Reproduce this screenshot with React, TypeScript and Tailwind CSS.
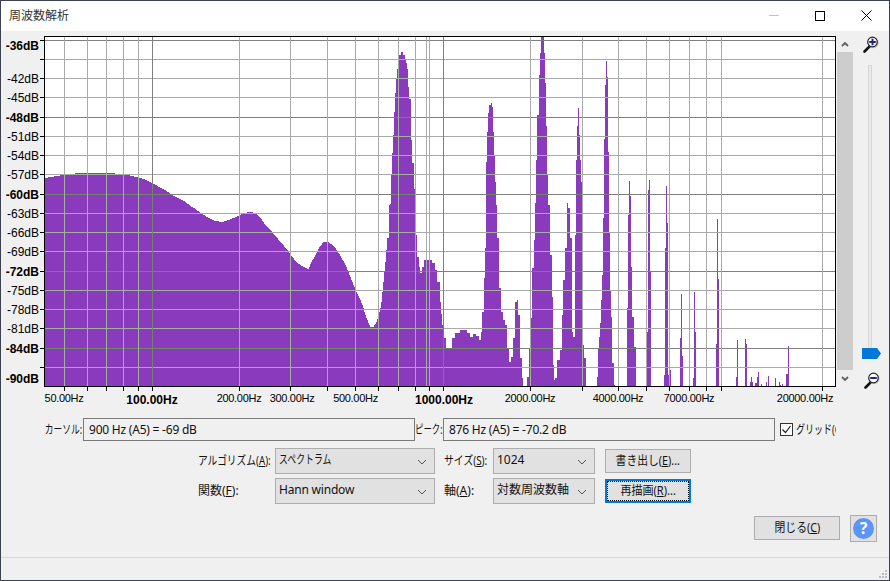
import React from "react";

const L = 44, R = 835, T = 37, B = 386;
const hLines: [number, string, boolean][] = [
  [40, "-36dB", true], [59, "", false], [78, "-42dB", false], [97, "-45dB", false], [117, "-48dB", true],
  [136, "-51dB", false], [155, "-54dB", false], [174, "-57dB", false], [194, "-60dB", true], [213, "-63dB", false],
  [232, "-66dB", false], [251, "-69dB", false], [271, "-72dB", true], [290, "-75dB", false], [309, "-78dB", false],
  [328, "-81dB", false], [348, "-84dB", true], [367, "", false],
];
const vLines: [number, boolean][] = [
  [64, false], [87, false], [106, false], [123, false], [138, false], [152, true], [239, false], [290, false], [327, false],
  [355, false], [378, false], [398, false], [415, false], [426.5, false], [429, false], [443, true], [530, false], [582, false],
  [618, false], [646, false], [669, false], [689, false], [706, false], [721, false], [822, false],
];
const xLabels: [number, string, boolean][] = [
  [64, "50.00Hz", false], [152, "100.00Hz", true], [239, "200.00Hz", false], [292, "300.00Hz", false], [355.5, "500.00Hz", false],
  [444, "1000.00Hz", true], [530, "2000.00Hz", false], [618, "4000.00Hz", false], [689, "7000.00Hz", false], [805, "20000.00Hz", false],
];

const s: [number, number][] = [
  [45,178],[47,177.5],[50,177],[56,176],[62,175],[68,174],[74,173.5],[83,172.5],[110,172.5],[115,173.5],[120,174],[125,175],[130,175.5],[135,177],[140,178],[146,180],[152,183],[156,185],[160,188],[165,190],[170,194],[175,197],[180,199],[185,202],[190,206],[195,209],[200,213],[205,216],[210,219],[215,221],[222,222],[228,220],[233,218],[239,215],[244,213],[248,212],[253,212.5],[256,214],[260,218],[265,225],[270,230],[275,236],[280,242],[287,250],[292,257],[296,262],[300,265],[304,267],[308,269],[311,262],[315,255],[319,247],[323,242],[328,242],[332,245],[335,248],[340,256],[345,265],[350,277],[355,290],[359,298],[362,305],[366,318],[370,327],[373,327],[376,322],[378,315],[380,308],[381,302],[383,282],[385,262],[387,238],[389,205],[390,204],[391,175],[392,153],[393,135],[394,112],[395,93],[396,79],[397,69],[398,59],[399,55],[401,52],[403,55],[405,59],[406,63],[407,69],[408,87],[409,99],[411,140],[412,163],[414,189],[415,205],[416,235],[417,257],[419,267],[420,273],[422,267],[424,260],[428,260],[432,263],[435,270],[437,282],[440,302],[441,314],[442,325],[444,338],[446,348],[449,348],[452,338],[455,333],[460,330],[463,330],[467,333],[470,337],[473,333.5],[476,336],[479,340],[481,332],[482,312],[484,278],[485,248],[486,162],[487,132],[488,113],[489,105],[491,103],[492,107],[493,132],[494,155],[495,182],[496,205],[497,238],[499,288],[501,312],[503,320],[505,325],[507,348],[509,362],[511,357],[513,338],[515,302],[517,300],[518,315],[520,358],[522,378],[523,386],[526,386],[527,377],[529,348],[530,335],[531,318],[532,268],[534,240],[535,203],[536,160],[537,115],[539,75],[540,53],[541,37],[544,53],[545,83],[546,126],[547,175],[548,205],[550,255],[552,297],[553,365],[554,380],[555,378],[557,360],[560,350],[562,315],[563,280],[565,248],[567,203],[568,208],[570,238],[572,332],[573,337],[575,235],[576,160],[577,126],[578,108],[579,135],[580,160],[581,182],[582,242],[583,345],[584,358],[586,386],
  [597,377],[598,348],[599,337],[600,323],[601,300],[602,275],[603,218],[604,139],[605,85],[606,61],[607,77],[608,152],[609,233],[610,290],[611,317],[612,363],[614,385],[615,386],
  [627,308],[628,215],[629,181],[630,196],[631,267],[632,317],[634,347],[636,386],
  [647,332],[648,190],[649,180],[650,272],[651,386],
  [664,375],[665,248],[666,186],[667,223],[668,375],[670,370],[671,386],
  [680,338],[681,294],[682,356],[683,386],
  [693,378],[694,292],[695,332],[696,386],
  [716,344],[717,219],[718,279],[719,386],
  [736,377],[737,340],[738,386],[745,339],[746,344],[747,386],
  [750,382],[751,377],[752,382],[753,386],[755,383],[757,377],[758,372],[759,386],[761,384],[762,386],[766,382],[767,386],[768,376],[769,386],[775,378],[776,386],[779,382],[780,385],[781,386],[782,384],[783,386],[786,374],[788,346],[789,386],
];

function specPath() {
  let d = `M${s[0][0]} ${B}`;
  for (let i = 0; i < s.length; i++) {
    const [x, y] = s[i];
    const next = i + 1 < s.length ? s[i + 1] : ([x + 1, B] as [number, number]);
    const gap = next[0] - x;
    if (x < 387 && gap > 1) {
      for (let k = 0; k < gap; k++) {
        const yy = Math.round(y + ((next[1] - y) * k) / gap);
        d += `V${yy}H${x + k + 1}`;
      }
    } else {
      d += `V${y}H${next[0]}`;
    }
  }
  return d + `V${B}Z`;
}

function Grid({ light, dark }: { light: string; dark: string }) {
  return (
    <g shapeRendering="crispEdges" strokeWidth={1}>
      {hLines.map(([y, , m]) => (
        <line key={y} x1={L} x2={R} y1={y + 0.5} y2={y + 0.5} stroke={m ? dark : light} />
      ))}
      {vLines.map(([x, m]) => (
        <line key={x} y1={T} y2={B} x1={Math.floor(x) + 0.5} x2={Math.floor(x) + 0.5} stroke={m ? dark : light} />
      ))}
    </g>
  );
}

function Chart() {
  const d = specPath();
  return (
    <svg width={836} height={373} viewBox="0 31 836 373" className="shrink-0 block overflow-visible">
      <defs>
        <clipPath id="spec"><path d={d} /></clipPath>
      </defs>
      <rect x={L} y={T} width={R - L} height={B - T} fill="#ffffff" />
      <Grid light="#a9a9a9" dark="#808080" />
      <path d={d} fill="#8a3bbd" shapeRendering="crispEdges" />
      <g clipPath="url(#spec)"><Grid light="#a3b0a0" dark="#708468" /></g>
      <g shapeRendering="crispEdges" stroke="#000000">
        <line x1={44} x2={836} y1={36.5} y2={36.5} />
        <line x1={44} x2={836} y1={386.5} y2={386.5} />
        <line x1={44.5} x2={44.5} y1={36} y2={387} />
        <line x1={835.5} x2={835.5} y1={36} y2={387} />
        {hLines.map(([y]) => <line key={y} x1={40} x2={44} y1={y + 0.5} y2={y + 0.5} />)}
        {vLines.filter(([x]) => x !== 426.5).map(([x]) => <line key={x} y1={387} y2={391} x1={Math.floor(x) + 0.5} x2={Math.floor(x) + 0.5} />)}
      </g>
      <g fontFamily="'Liberation Sans', Arial, sans-serif" fill="#000000">
        {hLines.filter(([, t]) => t).map(([y, t, m]) => (
          <text key={y} x={39} y={y + (y === 40 ? 10 : 5)} textAnchor="end" fontSize={12} fontWeight={m ? 700 : 400}>{t}</text>
        ))}
        <text x={39} y={383} textAnchor="end" fontSize={12} fontWeight={700}>-90dB</text>
        {xLabels.map(([x, t, m]) => (
          <text key={t} x={x} y={m ? 404 : 401.5} textAnchor="middle" fontSize={m ? 12 : 11} letterSpacing={m ? 0 : -0.3} fontWeight={m ? 700 : 400}>{t}</text>
        ))}
      </g>
    </svg>
  );
}

function Magnifier({ minus }: { minus?: boolean }) {
  return (
    <svg width={16} height={17} viewBox="0 0 16 17" className="block">
      <path d="M1.5 15.5 L7 10" stroke="#111111" strokeWidth={2.6} strokeLinecap="round" />
      <circle cx={10.3} cy={6.8} r={5.4} fill="#a9a9a9" opacity={0.55} />
      <circle cx={9.5} cy={6} r={4.8} fill="#ffffff" stroke="#222222" strokeWidth={1.2} />
      <rect x={6.2} y={5} width={6.6} height={2} fill="#22229a" />
      {!minus && <rect x={8.5} y={2.7} width={2} height={6.6} fill="#22229a" />}
    </svg>
  );
}

function Chev({ up }: { up?: boolean }) {
  return (
    <svg width={8} height={6} viewBox="0 0 8 6" className="block">
      <path d={up ? "M1 5 L4 2 L7 5" : "M1 1 L4 4 L7 1"} fill="none" stroke="#606060" strokeWidth={1.8} />
    </svg>
  );
}

function U({ c }: { c: string }) {
  return <span className="underline">{c}</span>;
}

function Combo({ width, children }: { width: string; children: React.ReactNode }) {
  return (
    <div className={`${width} h-[26px] flex items-center justify-between pl-[3px] pr-[7px] bg-[#e1e1e1] border border-[#adadad] text-[12px] text-[#111111] pb-[2px]`}>
      <span className="whitespace-nowrap">{children}</span>
      <svg width={10} height={6} viewBox="0 0 10 6" className="mt-[3px]"><path d="M1 1 L5 5 L9 1" fill="none" stroke="#555555" strokeWidth={1} /></svg>
    </div>
  );
}

function Button({ width, focus, children }: { width: string; focus?: boolean; children: React.ReactNode }) {
  return (
    <div className={`${width} h-[24px] flex items-center justify-center bg-[#e1e1e1] text-[12px] text-[#111111] whitespace-nowrap ${focus ? "border-2 border-[#0078d7]" : "border border-[#adadad]"}`}>
      {focus ? <div className="w-full h-full flex items-center justify-center border border-dotted border-black">{children}</div> : children}
    </div>
  );
}

export default function App() {
  return (
    <div
      className="w-[890px] h-[581px] flex flex-col overflow-hidden bg-[#f0f0f0] border-l border-b border-r border-[#3c4250] text-[12px] text-[#111111]"
      style={{ fontFamily: "'Noto Sans', 'Noto Sans CJK JP', sans-serif" }}
    >
      <div className="h-[1px] bg-[#3c4250] shrink-0" />
      <div className="h-[30px] shrink-0 bg-white flex items-center justify-between pl-[8px] pb-[1px]">
        <span className="text-[12px] text-[#333333]">周波数解析</span>
        <div className="flex items-center h-full">
          <div className="w-[46px] flex justify-center"><div className="w-[10px] h-[1px] bg-[#c4c4c4]" /></div>
          <div className="w-[46px] flex justify-center"><div className="w-[10px] h-[10px] border border-black" /></div>
          <div className="w-[46px] flex justify-center">
            <svg width={11} height={11} viewBox="0 0 11 11"><path d="M0.5 0.5 L10.5 10.5 M10.5 0.5 L0.5 10.5" stroke="#000" strokeWidth={1} /></svg>
          </div>
        </div>
      </div>

      <div className="flex h-[373px] shrink-0 -ml-[1px]">
        <Chart />
        <div className="w-[16px] ml-[1px] mt-[5px] mb-[17px] flex flex-col items-center">
          <div className="h-[16px] flex items-center justify-center"><Chev up /></div>
          <div className="flex-1 w-full bg-[#cdcdcd]" />
          <div className="h-[17px] flex items-center justify-center"><Chev /></div>
        </div>
        <div className="w-[36px] relative flex flex-col items-center pt-[5px]">
          <Magnifier />
          <div className="w-[4px] h-[290px] mt-[12px] mr-[2px] bg-[#e7eae7] border border-[#d6d6d6]" />
          <svg width={19} height={11} viewBox="0 0 19 11" className="absolute left-[9px] top-[317px]"><path d="M0 0 H15 L19 5.5 L15 11 H0 Z" fill="#0078d7" /></svg>
          <div className="absolute left-[11px] top-[341px]"><Magnifier minus /></div>
        </div>
      </div>

      <div className="mt-[14px] flex items-center h-[23px] shrink-0">
        <div className="w-[81px] flex justify-end whitespace-nowrap"><span className="block shrink-0 origin-right scale-x-[0.73]">カーソル:</span></div>
        <div className="w-[332px] h-[23px] ml-[1px] border border-[#7a7a7a] flex items-center pl-[5px] tracking-[-0.22px]">900 Hz (A5) = -69 dB</div>
        <div className="w-[28px] whitespace-nowrap"><span className="block w-[28px] origin-left scale-x-[0.7]">ピーク:</span></div>
        <div className="w-[332px] h-[23px] border border-[#7a7a7a] flex items-center pl-[5px] tracking-[-0.22px]">876 Hz (A5) = -70.2 dB</div>
        <div className="ml-[5px] w-[13px] h-[13px] border border-[#333333] bg-white flex items-center justify-center">
          <svg width={11} height={11} viewBox="0 0 11 11"><path d="M1.5 5.5 L4.5 8.5 L9.5 2" fill="none" stroke="#222" strokeWidth={1.2} /></svg>
        </div>
        <div className="ml-[3px] w-[40px] overflow-hidden whitespace-nowrap"><span className="block w-[60px] origin-left scale-x-[0.75]">グリッド(G)</span></div>
      </div>

      <div className="mt-[7px] ml-[197px] grid grid-cols-[77px_160px_58px_102px_96px] gap-y-[4px] shrink-0 items-center">
        <div className="whitespace-nowrap w-[77px]"><span className="block w-[90px] origin-left scale-x-[0.81]">アルゴリズム(<U c="A" />):</span></div>
        <Combo width="w-[160px]"><span className="block w-[72px] origin-left scale-x-[0.74]">スペクトラム</span></Combo>
        <div className="pl-[9px] whitespace-nowrap w-[58px]"><span className="block w-[49px] origin-left scale-x-[0.82]">サイズ(<U c="S" />):</span></div>
        <Combo width="w-[102px]">1024</Combo>
        <div className="ml-[10px]"><Button width="w-[86px]"><span className="scale-x-[0.9]">書き出し(<U c="E" />)...</span></Button></div>
        <span className="whitespace-nowrap">関数(<U c="F" />):</span>
        <Combo width="w-[160px]"><span className="tracking-[-0.2px]">Hann window</span></Combo>
        <span className="pl-[9px] whitespace-nowrap">軸(<U c="A" />):</span>
        <Combo width="w-[102px]">対数周波数軸</Combo>
        <div className="ml-[10px]"><Button width="w-[86px]" focus><span className="scale-x-[0.92]">再描画(<U c="R" />)...</span></Button></div>
      </div>

      <div className="mt-[10px] pr-[12px] flex justify-end items-center gap-[10px] h-[28px] shrink-0">
        <Button width="w-[86px]"><span className="scale-x-[0.9]">閉じる(<U c="C" />)</span></Button>
        <div className="w-[27px] h-[27px] border border-[#adadad] bg-[#e1e1e1] flex items-center justify-center">
          <div className="w-[21px] h-[21px] rounded-full bg-[#5b96f7] flex items-center justify-center text-white font-bold text-[16px] leading-none">?</div>
        </div>
      </div>

      <div className="mt-[15px] h-[1px] bg-[#d9d9d9] shrink-0" />
      <div className="flex-1 relative">
        <svg width={9} height={9} viewBox="0 0 9 9" className="absolute right-[1px] bottom-[1px]" fill="#bdbdbd" shapeRendering="crispEdges">
          <rect x={6} y={0} width={2} height={2} /><rect x={3} y={3} width={2} height={2} /><rect x={6} y={3} width={2} height={2} />
          <rect x={0} y={6} width={2} height={2} /><rect x={3} y={6} width={2} height={2} /><rect x={6} y={6} width={2} height={2} />
        </svg>
      </div>
    </div>
  );
}
